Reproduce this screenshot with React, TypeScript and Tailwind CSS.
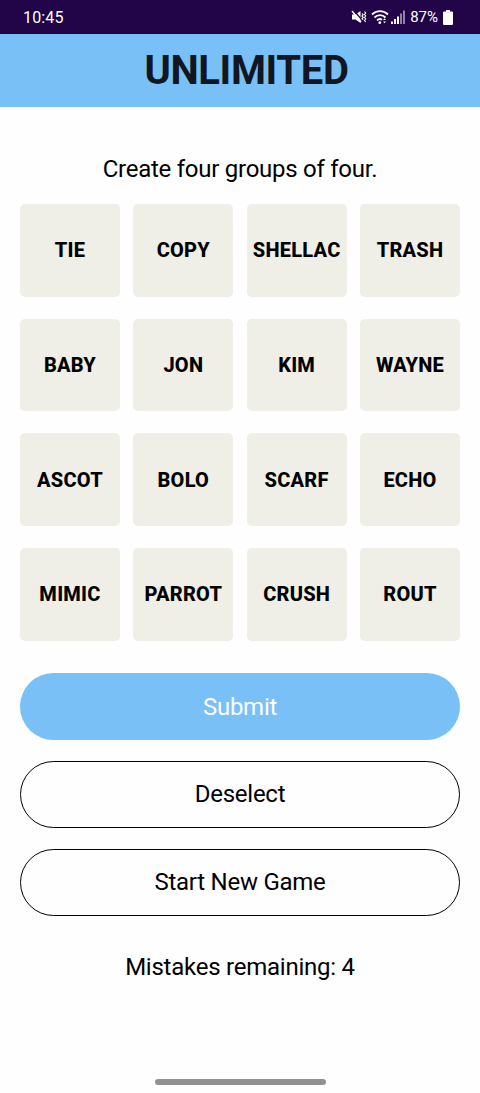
const rows = [
  ["TIE", "COPY", "SHELLAC", "TRASH"],
  ["BABY", "JON", "KIM", "WAYNE"],
  ["ASCOT", "BOLO", "SCARF", "ECHO"],
  ["MIMIC", "PARROT", "CRUSH", "ROUT"],
];

function StatusIcons() {
  return (
    <div className="flex items-center">
      <svg width="16" height="16" viewBox="0 0 16 16" fill="none" stroke="white">
        <path d="M1 5.500h3.500L9.500 2v12L4.500 10.500H1z" fill="white" stroke="none" />
        <path d="M2.500 1L11 11" stroke="#220548" strokeWidth="1.200" />
        <path d="M1 2L10 13" strokeWidth="1.400" />
        <path d="M11 4.500l1.200 1.200L11 7l1.200 1.300L11 9.500l1.200 1.300M13.500 2.500L14.700 4 13.500 5.500 14.700 7 13.500 8.500 14.700 10 13.500 11.500 14.700 13" strokeWidth="1.100" />
      </svg>
      <svg className="ml-[4px]" width="18" height="16" viewBox="0 0 18 16" fill="none" stroke="white" strokeWidth="1.800">
        <path d="M1 5.500C5.500 1 12.500 1 17 5.500M3.500 8.500C6.500 5.400 11.500 5.400 14.500 8.500M6 11.300Q8.500 9 11 10.800" />
        <circle cx="8.800" cy="13.700" r="1.400" fill="white" stroke="none" />
        <path d="M12 11l1.500-1.800L15 11zM12 12.500h3l-1.500 1.800z" fill="white" stroke="none" />
      </svg>
      <svg className="ml-[2px]" width="16" height="16" viewBox="0 0 16 16" fill="white">
        <path d="M0 12.500h2V15H0zM3 10h2v5H3zM6 7.500h2V15H6z" />
        <path d="M9 4.500h2V15H9zM12 1.500h2V15h-2z" opacity=".5" />
      </svg>
      <span className="ml-[3px] pt-px text-[15px]">87%</span>
      <svg className="ml-[5px]" width="10" height="15" viewBox="0 0 10 15" fill="white">
        <path d="M3 0h4v1.500h2q1 0 1 1V14q0 1-1 1H1q-1 0-1-1V2.500q0-1 1-1h2z" />
      </svg>
    </div>
  );
}

export default function App() {
  return (
    <main className="flex h-[1093px] w-[480px] flex-col bg-[#fefefe] font-['Roboto',sans-serif] text-black">
      <div className="flex h-[34px] shrink-0 items-center justify-between bg-[#220548] pr-[27px] pl-[23px] text-white">
        <span className="pt-px text-base tracking-[0.15px]">10:45</span>
        <StatusIcons />
      </div>
      <header className="flex h-[73px] shrink-0 items-center justify-center bg-[#78c0f5] pl-[13px]">
        <h1 className="text-[40px] leading-none font-bold tracking-[-0.35px] text-[#111722]">UNLIMITED</h1>
      </header>
      <p className="mt-[46px] text-center text-2xl leading-8 tracking-[-0.26px]">Create four groups of four.</p>
      <div className="mt-[19px] grid grid-cols-4 gap-x-[13.300px] gap-y-[22px] px-5">
        {rows.flat().map((word) => (
          <button key={word} className="h-[92.700px] rounded-[5px] bg-[#efefe8] text-xl font-extrabold tracking-[0.25px]">{word}</button>
        ))}
      </div>
      <div className="mt-8 flex flex-col gap-[21px] px-5 text-2xl tracking-[-0.26px]">
        <button className="h-[67px] rounded-full bg-[#78c0f5] pt-px text-white">Submit</button>
        <button className="h-[67px] rounded-full border-[1.500px] border-black">Deselect</button>
        <button className="h-[67px] rounded-full border-[1.500px] border-black">Start New Game</button>
      </div>
      <p className="mt-[35px] text-center text-2xl leading-8 tracking-[-0.24px]">Mistakes remaining: 4</p>
      <div className="mx-auto mt-auto mb-2 h-[6px] w-[171px] rounded-full bg-[#919191]" />
    </main>
  );
}
